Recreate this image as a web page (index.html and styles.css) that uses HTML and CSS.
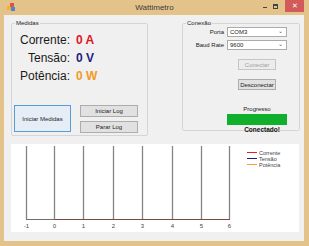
FILE: index.html
```html
<!doctype html>
<html>
  <head>
    <meta charset="utf-8">
    <title>Wattimetro</title>
    <link rel="stylesheet" href="styles.css">
  </head>
  <body>
    <div class="window">
      <div class="titlebar">
        <svg class="app-icon" width="8" height="8" viewBox="0 0 8 8">
          <rect x="0" y="3" width="4" height="4" fill="#f2b134"/>
          <rect x="3" y="0" width="4" height="4" fill="#e0524a"/>
          <rect x="4" y="4" width="4" height="4" fill="#4a86d8"/>
        </svg>
        <span class="title">Wattimetro</span>
        <div class="controls">
          <span class="ctl min"></span>
          <span class="ctl max"><i></i></span>
          <span class="ctl close">✕</span>
        </div>
      </div>

      <div class="client">
        <div class="top">
          <fieldset class="group medidas">
            <legend>Medidas</legend>
            <div class="readings">
              <span class="lbl">Corrente:</span><span class="val corrente">0 A</span>
              <span class="lbl">Tensão:</span><span class="val tensao">0 V</span>
              <span class="lbl">Potência:</span><span class="val potencia">0 W</span>
            </div>
            <div class="actions">
              <button class="btn big focused">Iniciar Medidas</button>
              <div class="log-btns">
                <button class="btn small">Iniciar Log</button>
                <button class="btn small">Parar Log</button>
              </div>
            </div>
          </fieldset>

          <fieldset class="group conexao">
            <legend>Conexão</legend>
            <div class="form">
              <label>Porta</label>
              <div class="combo">COM3<span class="arrow">⌄</span></div>
              <label>Baud Rate</label>
              <div class="combo">9600<span class="arrow">⌄</span></div>
            </div>
            <div class="conn-btns">
              <button class="btn conn" disabled>Conectar</button>
              <button class="btn conn">Desconectar</button>
            </div>
            <div class="progress">
              <span class="plabel">Progresso</span>
              <div class="bar"></div>
              <span class="status">Conectado!</span>
            </div>
          </fieldset>
        </div>

        <div class="chart">
          <svg width="288" height="88" viewBox="0 0 288 88">
            <g stroke="#848484" stroke-width="1.3">
              <line x1="15.5" y1="2" x2="15.5" y2="75"/>
              <line x1="43.5" y1="2" x2="43.5" y2="75"/>
              <line x1="72.5" y1="2" x2="72.5" y2="75"/>
              <line x1="102.5" y1="2" x2="102.5" y2="75"/>
              <line x1="131.5" y1="2" x2="131.5" y2="75"/>
              <line x1="161.5" y1="2" x2="161.5" y2="75"/>
              <line x1="190.5" y1="2" x2="190.5" y2="75"/>
              <line x1="218.5" y1="2" x2="218.5" y2="75"/>
            </g>
            <line x1="15" y1="75.5" x2="44" y2="75.5" stroke="#6e6e6e"/>
            <line x1="44" y1="75.5" x2="219" y2="75.5" stroke="#7a4a3c"/>
            <g class="ticks" font-size="6" fill="#444" text-anchor="middle">
              <text x="15.5" y="84">-1</text>
              <text x="43.5" y="84">0</text>
              <text x="72.5" y="84">1</text>
              <text x="102.5" y="84">2</text>
              <text x="131.5" y="84">3</text>
              <text x="161.5" y="84">4</text>
              <text x="190.5" y="84">5</text>
              <text x="218.5" y="84">6</text>
            </g>
            <g class="legend" font-size="5.5" fill="#444">
              <line x1="236" y1="8.5" x2="246" y2="8.5" stroke="#e0202a"/>
              <text x="248" y="10.5">Corrente</text>
              <line x1="236" y1="14.5" x2="246" y2="14.5" stroke="#1c1c78"/>
              <text x="248" y="16.5">Tensão</text>
              <line x1="236" y1="20.5" x2="246" y2="20.5" stroke="#f4a234"/>
              <text x="248" y="22.5">Potência</text>
            </g>
          </svg>
        </div>
      </div>
    </div>
  </body>
</html>
```

FILE: styles.css
```css
* {
  margin: 0;
  padding: 0;
  box-sizing: border-box;
}

body {
  font-family: "Liberation Sans", Arial, sans-serif;
  background: #e4c38b;
}

div.window {
  width: 309px;
  height: 246px;
  background: #e4c38b;
}

/* title bar */
div.titlebar {
  height: 15px;
  display: grid;
  grid-template-columns: 1fr auto 1fr;
  align-items: center;
}
svg.app-icon {
  margin-left: 7px;
  margin-top: -2px;
}
span.title {
  font-size: 8px;
  color: #3a3a3a;
}
div.controls {
  justify-self: end;
  align-self: start;
  display: flex;
  height: 12px;
  margin-right: 5px;
}
span.ctl {
  width: 11px;
  display: flex;
  align-items: center;
  justify-content: center;
}
span.min::after {
  content: "";
  width: 4px;
  height: 1px;
  margin-top: 3px;
  background: #444;
}
span.max {
  margin-right: 4px;
}
span.max>i {
  width: 5px;
  height: 5px;
  border: 1px solid #444;
  border-top-width: 2px;
}
span.close {
  width: 19px;
  background: #d25a5a;
  color: #fff;
  font-size: 7px;
}

/* client area */
div.client {
  margin: 0 5px 0 4px;
  height: 226px;
  background: #f0f0f0;
  padding: 5px 0 0 7px;
}
div.top {
  display: flex;
  align-items: flex-start;
  gap: 34px;
  height: 124px;
}

fieldset.group {
  border: 1px solid #d5d5d5;
  border-radius: 2px;
}
fieldset.group>legend {
  font-size: 6px;
  color: #222;
  margin-left: 3px;
  padding: 0 1px;
}
fieldset.medidas {
  width: 137px;
  height: 116px;
  padding: 5px 2px 0 0;
}
fieldset.conexao {
  width: 118px;
  height: 111px;
}

div.readings {
  display: grid;
  grid-template-columns: 58px auto;
  column-gap: 6px;
  grid-auto-rows: 18px;
  align-items: center;
}
span.lbl {
  font-size: 12px;
  color: #1a1a1a;
  text-align: right;
}
span.val {
  font-size: 12px;
  font-weight: bold;
}
span.corrente { color: #e0141e; }
span.tensao { color: #1c1c82; }
span.potencia { color: #f29a26; }

div.actions {
  display: flex;
  gap: 9px;
  margin: 20px 0 0 2px;
}
button.btn {
  font-family: "Liberation Sans", Arial, sans-serif;
  font-size: 6px;
  color: #222;
  background: #e1e1e1;
  border: 1px solid #adadad;
}
button.big {
  width: 57px;
  height: 27px;
}
button.focused {
  border-color: #5b9bd5;
  background: #e5eef7;
}
div.log-btns {
  display: flex;
  flex-direction: column;
  gap: 4px;
}
button.small {
  width: 58px;
  height: 12px;
}

/* conexao */
div.form {
  display: grid;
  grid-template-columns: 41px 60px;
  column-gap: 3px;
  row-gap: 3px;
  grid-auto-rows: 10px;
  align-items: center;
  margin-top: 1px;
}
div.form>label {
  font-size: 6px;
  color: #222;
  text-align: right;
}
div.combo {
  height: 10px;
  background: #fff;
  border: 1px solid #ababab;
  font-size: 6px;
  color: #222;
  display: flex;
  align-items: center;
  justify-content: space-between;
  padding: 0 3px 0 2px;
}
span.arrow {
  font-size: 6px;
  color: #555;
  margin-top: -3px;
}

div.conn-btns {
  display: flex;
  flex-direction: column;
  align-items: center;
  gap: 9px;
  margin: 9px 0 0 44px;
  width: 60px;
}
button.conn {
  width: 38px;
  height: 11px;
}
button.conn:disabled {
  color: #a0a0a0;
  border-color: #c6c6c6;
  background: #ececec;
}

div.progress {
  display: flex;
  flex-direction: column;
  align-items: center;
  margin: 16px 0 0 44px;
  width: 60px;
}
span.plabel {
  font-size: 6px;
  color: #222;
}
div.bar {
  width: 60px;
  height: 11px;
  margin-top: 2px;
  background: #10b02c;
}
span.status {
  font-size: 6.5px;
  font-weight: bold;
  color: #111;
  margin: 1px 0 0 10px;
}

/* chart */
div.chart {
  width: 288px;
  height: 88px;
  background: #fff;
}
div.chart svg {
  display: block;
  font-family: "Liberation Sans", Arial, sans-serif;
}
```
